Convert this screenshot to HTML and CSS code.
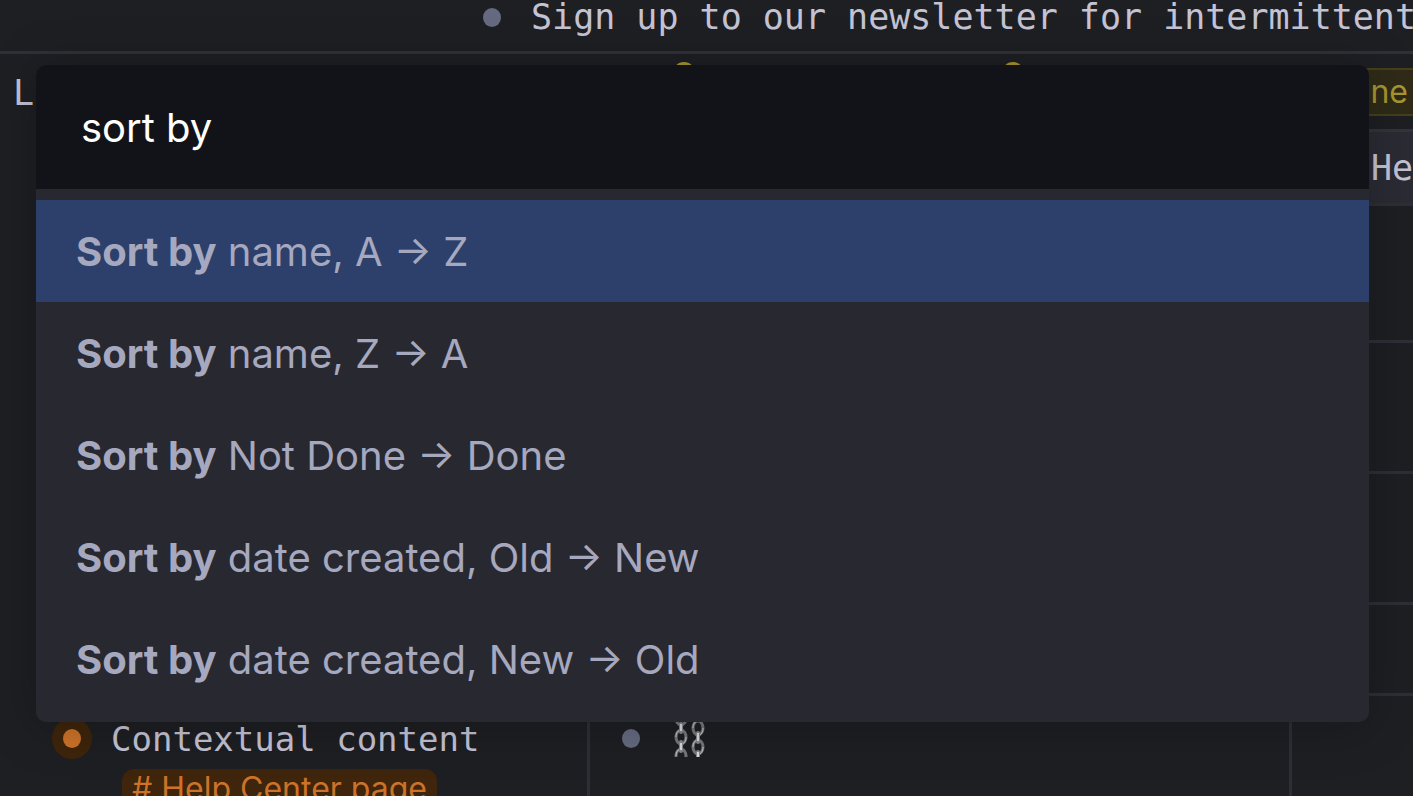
FILE: index.html
```
<!DOCTYPE html>
<html lang="en">
<head>
    <meta charset="UTF-8">
    <meta name="viewport" content="width=device-width, initial-scale=1.0">
    <title>Sort by</title>
    <link rel="stylesheet" href="styles.css">
</head>
<body>
    <div class="page">
        <!-- Outline behind the command menu -->
        <div class="top-row">
            <span class="bullet"></span>
            <span>Sign up to our newsletter for intermittent</span>
        </div>
        <div class="label-row">
            <span class="label">L</span>
            <span class="dot"></span>
            <span class="dot"></span>
            <span class="tag tag-yellow">ne</span>
        </div>
        <table class="grid">
            <thead>
                <tr>
                    <th class="col-name"></th>
                    <th class="col-content"></th>
                    <th class="col-help">He</th>
                </tr>
            </thead>
            <tbody>
                <tr class="tall"><td></td><td></td><td></td></tr>
                <tr class="mid"><td></td><td></td><td></td></tr>
                <tr class="mid"><td></td><td></td><td></td></tr>
                <tr class="short"><td></td><td></td><td></td></tr>
                <tr class="last">
                    <td>
                        <div class="node">
                            <span class="bullet bullet-orange"></span>
                            <span>Contextual content</span>
                        </div>
                        <a class="tag tag-orange" href="#"># Help Center page</a>
                    </td>
                    <td>
                        <div class="node link-node">
                            <span class="bullet"></span>
                            <svg class="chains" viewBox="0 0 32 36" width="32" height="36" role="img" aria-label="Chains">
                                <g fill="none" stroke="#74787b" stroke-width="3">
                                    <ellipse cx="7" cy="-3" rx="5" ry="7"/>
                                    <ellipse cx="7" cy="16" rx="5" ry="7"/>
                                    <ellipse cx="7" cy="35" rx="5" ry="7"/>
                                    <ellipse cx="24" cy="7" rx="5" ry="7"/>
                                    <ellipse cx="24" cy="26" rx="5" ry="7"/>
                                </g>
                                <g fill="none" stroke="#c8cac8" stroke-width="1">
                                    <path d="M2 16c0-4 2-7 5-7M2 35c0-4 2-7 5-7M19 7c0-4 2-7 5-7M19 26c0-4 2-7 5-7"/>
                                    <path d="M12 16c0 4-2 7-4 7M29 7c0 4-2 7-4 7M29 26c0 4-2 7-4 7"/>
                                </g>
                                <path d="M7 3v8M7 21v9M24 12v9M24 31v8" stroke="#86898c" stroke-width="4" stroke-linecap="round"/>
                                <path d="M7 3v7M7 22v7M24 12v8M24 31v8" stroke="#d4dade" stroke-width="2"/>
                            </svg>
                        </div>
                    </td>
                    <td></td>
                </tr>
            </tbody>
        </table>
    </div>

    <!-- Command menu -->
    <div class="menu">
        <input class="search" type="text" value="sort by" aria-label="Search commands">
        <ul class="results">
            <li><button class="selected" type="button"><b>Sort by</b> name, A → Z</button></li>
            <li><button type="button"><b>Sort by</b> name, Z → A</button></li>
            <li><button type="button"><b>Sort by</b> Not Done → Done</button></li>
            <li><button type="button"><b>Sort by</b> date created, Old → New</button></li>
            <li><button type="button"><b>Sort by</b> date created, New → Old</button></li>
        </ul>
    </div>
</body>
</html>
```

FILE: styles.css
```
* {
    box-sizing: border-box;
}
body {
    margin: 0;
    background: #1e1f23;
    color: #c4c3d4;
    font-family: "DejaVu Sans Mono", monospace;
    font-size: 35px;
    line-height: 40px;
}
.page {
    height: 100vh;
    overflow: hidden;
}
.top-row {
    display: flex;
    align-items: center;
    gap: 30px;
    height: 54px;
    padding: 0 0 17px 483px;
    border-bottom: 3px solid #303038;
    white-space: nowrap;
}
.bullet {
    flex: none;
    width: 18px;
    height: 19px;
    border-radius: 50%;
    background: #666a80;
}
.bullet-orange {
    background: #cc7229;
    box-shadow: 0 0 0 11px #3e250b;
}
.label-row {
    display: flex;
    align-items: flex-start;
    height: 75px;
    padding-top: 8px;
}
.label {
    width: 663px;
    padding: 11px 0 0 13px;
}
.dot {
    width: 22px;
    height: 22px;
    margin: 0 297px 0 10px;
    border-radius: 50%;
    background: #a8932c;
}
.tag {
    font-family: Inter, sans-serif;
    font-size: 32px;
}
.tag-yellow {
    flex: 1;
    margin-top: 6px;
    padding: 2px 5px;
    border: 2px solid #45401a;
    border-right: 0;
    background: #2f2b18;
    color: #a8962f;
    text-align: right;
}
.tag-orange {
    display: inline-block;
    margin-left: 78px;
    padding: 0 10px;
    border-radius: 12px;
    background: #3e250b;
    color: #cc7229;
    text-decoration: none;
}

/* Table */
.grid {
    width: calc(100% - 44px);
    margin-left: 44px;
    table-layout: fixed;
    border-spacing: 0;
}
.grid th,
.grid td {
    padding: 0;
    border-bottom: 3px solid #2e2e37;
    border-right: 3px solid #2e2e37;
    vertical-align: top;
}
.grid th:last-child,
.grid td:last-child {
    border-right: 0;
}
.grid th {
    height: 77px;
    border-top: 3px solid #33333c;
    background: #2b2b34;
    font-weight: normal;
    vertical-align: middle;
}
.grid .col-name {
    width: 546px;
}
.grid .col-help {
    width: 121px;
    padding-left: 79px;
    text-align: left;
}
.tall td {
    height: 137px;
}
.mid td {
    height: 131px;
}
.short td {
    height: 91px;
}
.last td {
    height: 140px;
    border-bottom: 0;
}
.node {
    display: flex;
    align-items: center;
    gap: 30px;
    height: 57px;
    margin-bottom: 15px;
    padding: 28px 0 0 19px;
    font-size: 34px;
    white-space: nowrap;
}
.link-node {
    gap: 34px;
    padding-left: 32px;
}
.chains {
    display: block;
}

/* Menu */
.menu {
    position: absolute;
    top: 65px;
    left: 36px;
    right: 44px;
    overflow: hidden;
    border-radius: 10px;
    background: #282830;
    box-shadow: 0 4px 50px rgba(0, 0, 0, 0.25);
}
.search {
    display: block;
    width: 100%;
    height: 124px;
    padding: 0 45px;
    border: 0;
    outline: 0;
    background: #121318;
    color: #fff;
    font-family: Inter, sans-serif;
    font-size: 40px;
}
.results {
    margin: 0;
    padding: 11px 0 12px;
    list-style: none;
}
.results button {
    display: block;
    width: 100%;
    height: 102px;
    padding: 0 40px;
    border: 0;
    background: none;
    color: #a6a8bf;
    font-family: Inter, sans-serif;
    font-size: 40px;
    font-weight: 400;
    text-align: left;
}
.results b {
    font-weight: 700;
}
.results .selected {
    background: #2c406b;
}
```
